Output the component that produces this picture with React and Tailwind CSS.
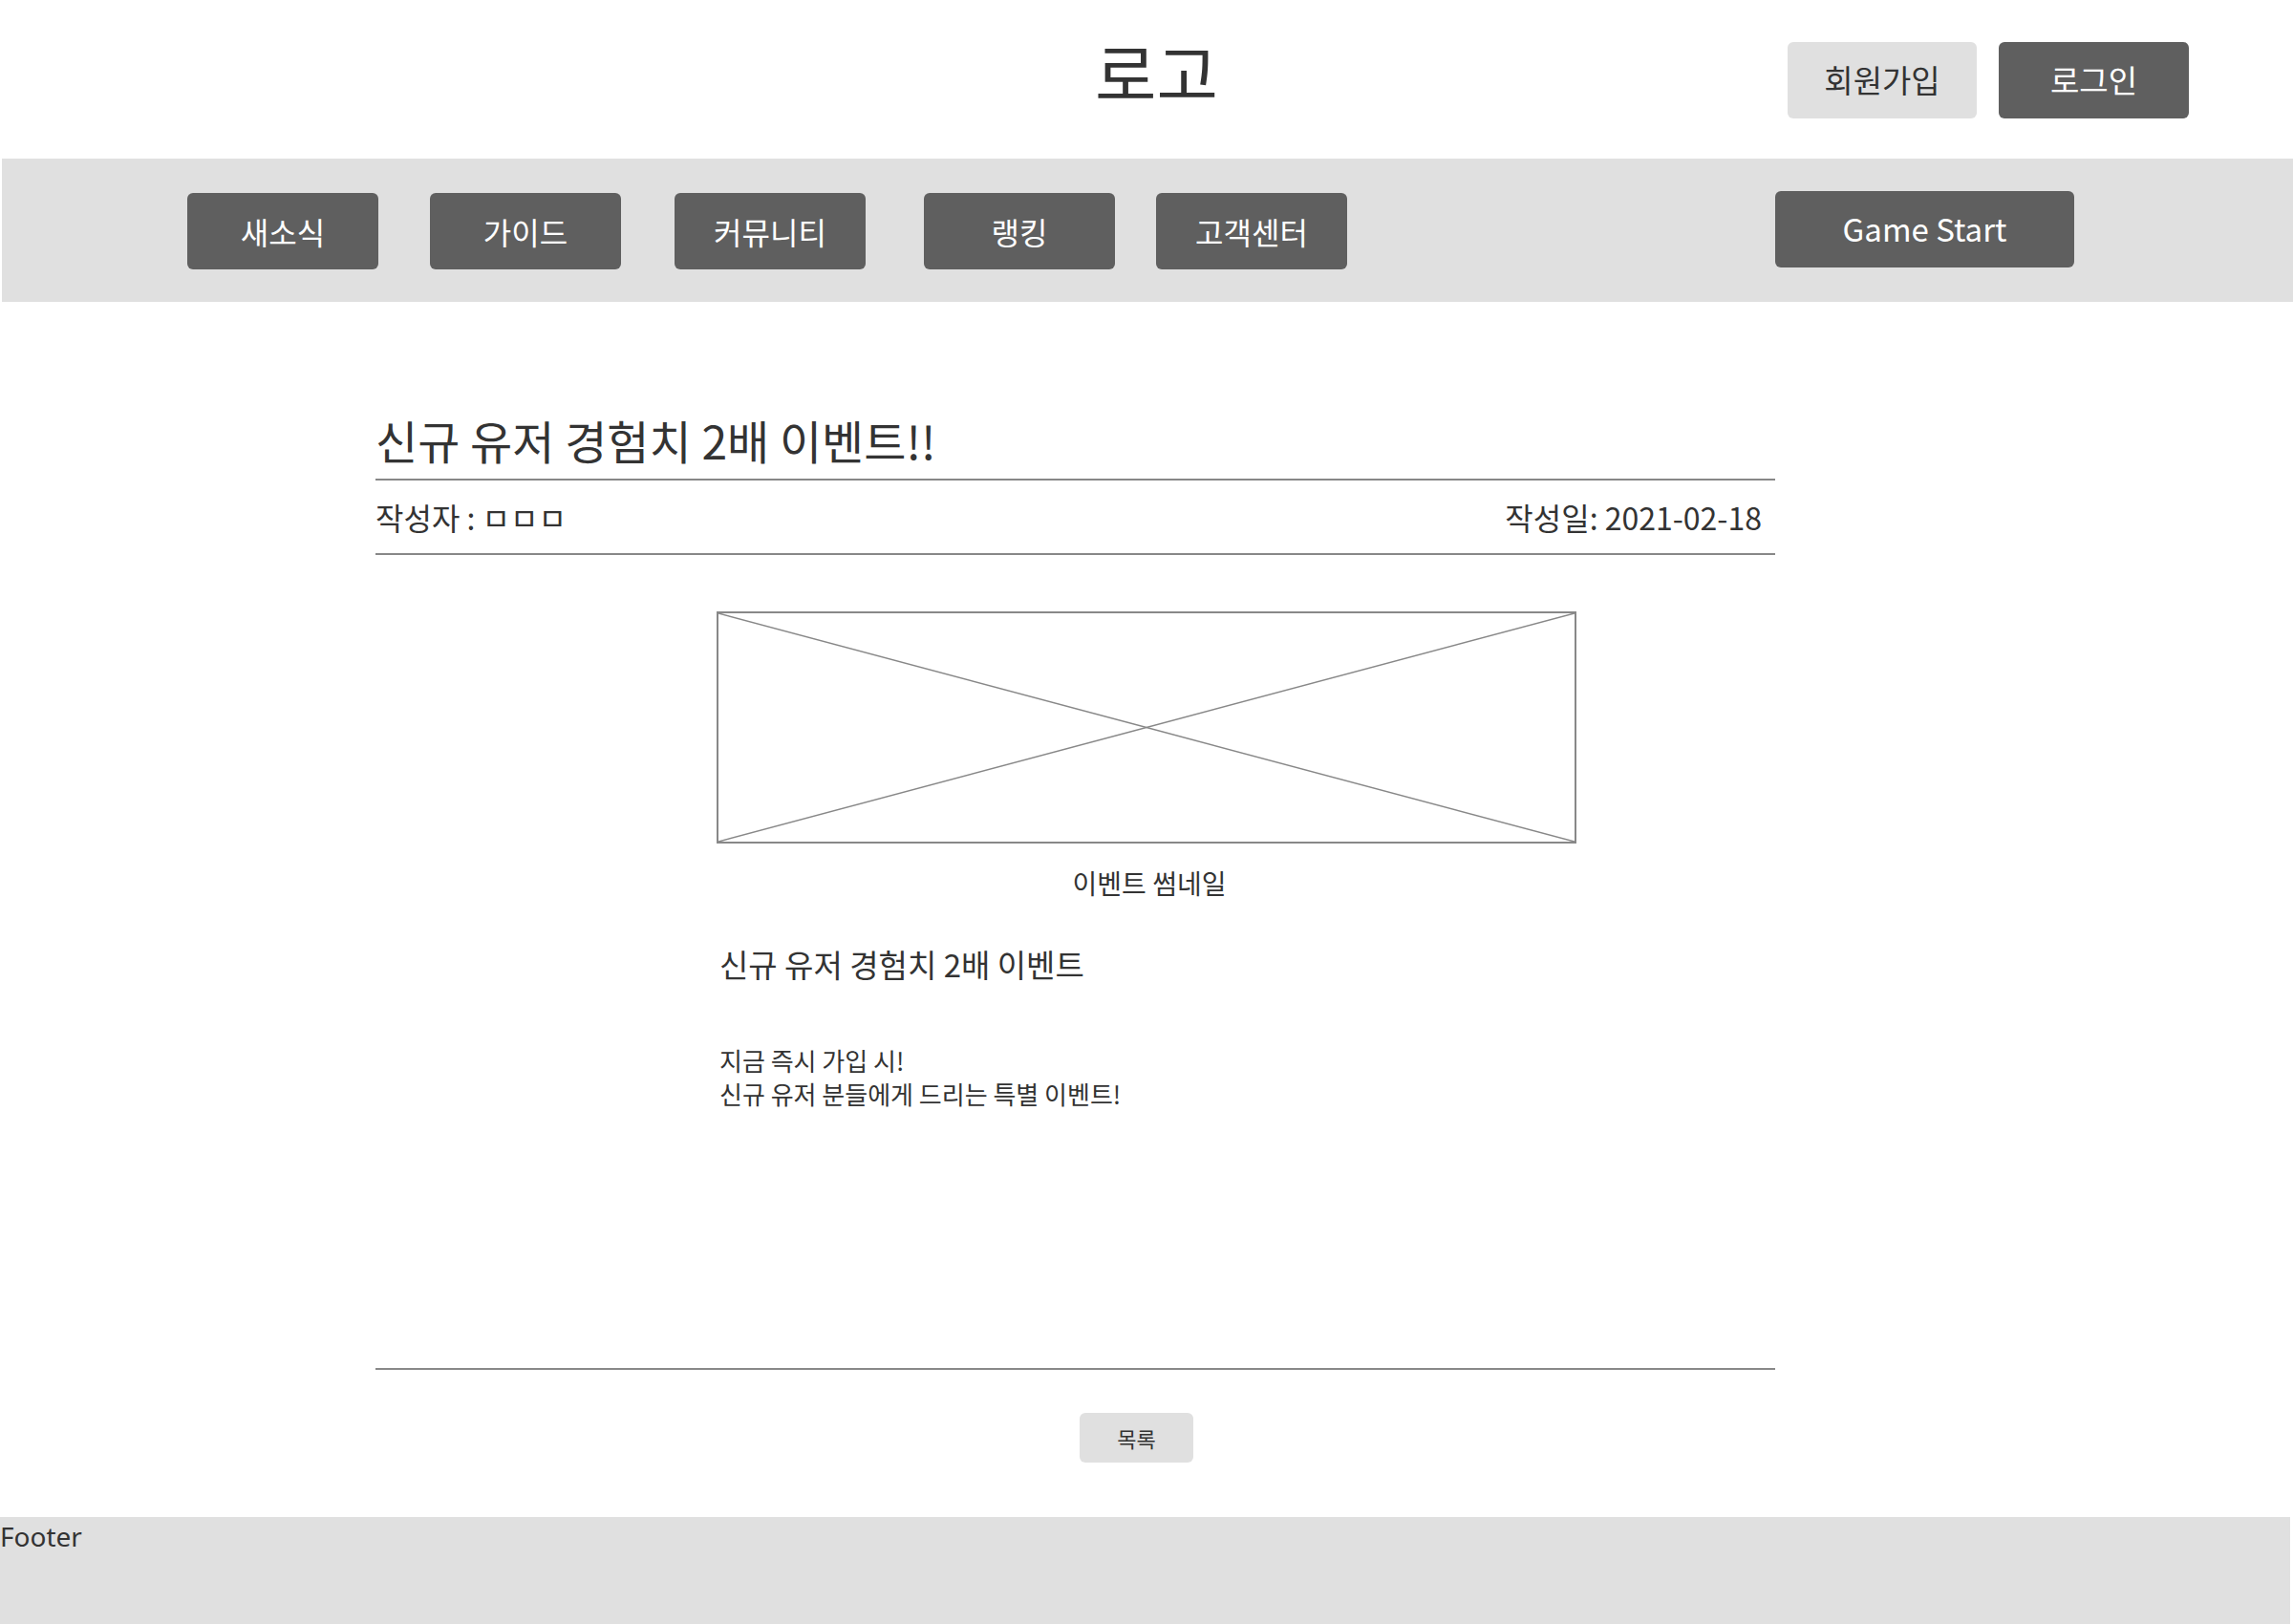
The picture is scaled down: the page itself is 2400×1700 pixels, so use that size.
import React from "react";

const navItems = [
  { label: "새소식", ml: "ml-[194px]" },
  { label: "가이드", ml: "ml-[54px]" },
  { label: "커뮤니티", ml: "ml-[56px]" },
  { label: "랭킹", ml: "ml-[61px]" },
  { label: "고객센터", ml: "ml-[43px]" },
];

export default function App() {
  return (
    <div
      className="w-[2400px] bg-white text-[#333333]"
      style={{ fontFamily: '"Noto Sans CJK KR", "Noto Sans", sans-serif' }}
    >
      {/* Header */}
      <header className="flex h-[166px] items-start">
        <div className="ml-[1146px] mt-[40px] text-[70px] leading-none text-[#333333]">로고</div>
        <div className="ml-auto mr-[109px] mt-[44px] flex gap-[23px]">
          <button className="flex h-[80px] w-[198px] items-center justify-center rounded-[6px] bg-[#e0e0e0] text-[33px] text-[#333333]">
            회원가입
          </button>
          <button className="flex h-[80px] w-[199px] items-center justify-center rounded-[6px] bg-[#5f5f5f] text-[33px] text-white">
            로그인
          </button>
        </div>
      </header>

      {/* Nav */}
      <nav className="ml-[2px] flex h-[150px] items-start bg-[#e0e0e0]">
        {navItems.map((item) => (
          <button
            key={item.label}
            className={`${item.ml} mt-[36px] flex h-[80px] w-[200px] items-center justify-center rounded-[6px] bg-[#5f5f5f] text-[32px] text-white`}
          >
            {item.label}
          </button>
        ))}
        <button className="ml-[448px] mt-[34px] flex h-[80px] w-[313px] items-center justify-center rounded-[6px] bg-[#5f5f5f] text-[33px] text-white">
          Game Start
        </button>
      </nav>

      {/* Main */}
      <main className="ml-[393px] w-[1465px]">
        <h1 className="mt-[120px] border-b-2 border-[#888888] pb-[17px] text-[48px] font-normal leading-none">
          신규 유저 경험치 2배 이벤트!!
        </h1>
        <div className="flex h-[78px] items-center justify-between border-b-2 border-[#888888] pr-[14px] text-[32px]">
          <span>작성자 : ㅁㅁㅁ</span>
          <span>작성일: 2021-02-18</span>
        </div>

        <div className="ml-[357px] mt-[59px] w-[900px]">
          <div className="h-[243px] w-[900px] border-2 border-[#888888]">
            <svg className="h-full w-full" viewBox="0 0 100 100" preserveAspectRatio="none">
              <line x1="0" y1="0" x2="100" y2="100" stroke="#888888" strokeWidth="1.5" vectorEffect="non-scaling-stroke" />
              <line x1="100" y1="0" x2="0" y2="100" stroke="#888888" strokeWidth="1.5" vectorEffect="non-scaling-stroke" />
            </svg>
          </div>
          <p className="mt-[27px] pl-[6px] text-center text-[28px] leading-none">이벤트 썸네일</p>
        </div>

        <div className="ml-[360px]">
          <h2 className="mt-[55px] text-[33px] font-normal leading-none">신규 유저 경험치 2배 이벤트</h2>
          <div className="mt-[66px] text-[26px] leading-[35px]">
            <p>지금 즉시 가입 시!</p>
            <p>신규 유저 분들에게 드리는 특별 이벤트!</p>
          </div>
        </div>

        <div className="mt-[270px] border-t-2 border-[#888888]" />
        <div className="ml-[737px] mt-[45px]">
          <button className="flex h-[52px] w-[119px] items-center justify-center rounded-[6px] bg-[#e0e0e0] text-[22px] text-[#333333]">
            목록
          </button>
        </div>
      </main>

      {/* Footer */}
      <footer className="mr-[3px] mt-[57px] h-[113px] bg-[#e0e0e0]">
        <div className="text-[28px] leading-[40px] text-[#333333]" style={{ fontFamily: '"Noto Sans", sans-serif' }}>
          Footer
        </div>
      </footer>
    </div>
  );
}
